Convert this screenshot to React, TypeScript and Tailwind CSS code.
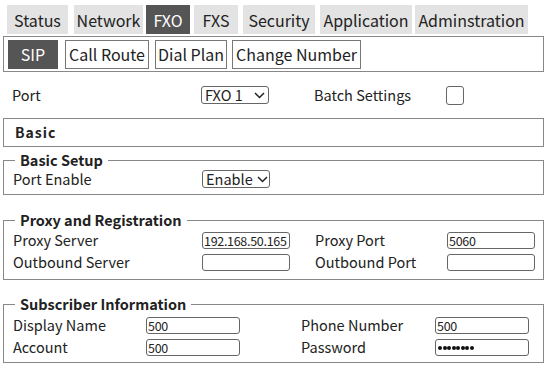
const font = "font-['Noto_Sans_CJK_SC','Noto_Sans',sans-serif]";

const topTabs = [
  { label: "Status", cls: "w-[61px]" },
  { label: "Network", cls: "ml-[6px] w-[69px]" },
  { label: "FXO", cls: "ml-[3px] w-[44px]" },
  { label: "FXS", cls: "ml-[4px] w-[44px]" },
  { label: "Security", cls: "ml-[5px] w-[72px]" },
  { label: "Application", cls: "ml-[5px] w-[92px]" },
  { label: "Adminstration", cls: "ml-[3px] w-[113px]" },
];

const subTabs = [
  { label: "SIP", cls: "w-[50px]" },
  { label: "Call Route", cls: "ml-[7px] w-[84px]" },
  { label: "Dial Plan", cls: "ml-[6px] w-[72px]" },
  { label: "Change Number", cls: "ml-[5px] w-[129px]" },
];

function Chevron() {
  return (
    <svg width="11" height="7" viewBox="0 0 11 7" className="ml-[4px] shrink-0">
      <polyline points="1,1 5.5,5.5 10,1" fill="none" stroke="#222" strokeWidth="1.5" />
    </svg>
  );
}

function Select({ value, className = "" }: { value: string; className?: string }) {
  return (
    <div className={`flex h-[18px] w-[68px] items-center rounded-[3px] border border-[#666] px-[3px] text-[14.5px] leading-none ${className}`}>
      <span>{value}</span>
      <Chevron />
    </div>
  );
}

function Input({ value = "", w = "w-[88px]", dots = false }: { value?: string; w?: string; dots?: boolean }) {
  return (
    <div className={`flex h-[17px] ${w} shrink-0 items-center whitespace-nowrap rounded-[3px] border border-[#666] px-[1px] text-[12.5px] leading-[15px] tracking-[-0.3px]`}>
      {dots ? (
        <div className="mt-[2px] flex gap-[0.5px] pl-[1px]">
          {Array.from({ length: 8 }).map((_, i) => (
            <span key={i} className="h-[4px] w-[4px] rounded-full bg-[#111]" />
          ))}
        </div>
      ) : (
        value
      )}
    </div>
  );
}

function Group({ title, children, className = "" }: { title: string; children: React.ReactNode; className?: string }) {
  return (
    <fieldset className={`mx-[3px] w-[541px] border border-[#888] px-[8px] ${className}`}>
      <legend className="ml-[3px] px-[5px] text-[14.5px] font-bold leading-[16px]">{title}</legend>
      {children}
    </fieldset>
  );
}

export default function App() {
  return (
    <div className={`h-[371px] w-[550px] overflow-hidden bg-white text-[#222] ${font}`}>
      {/* main menu */}
      <div className="flex pl-[7px] pt-[5px]">
        {topTabs.map((t) => (
          <div
            key={t.label}
            className={`flex h-[29px] items-center justify-center text-[16px] ${t.cls} ${t.label === "FXO" ? "bg-[#555] text-white" : "bg-[#e3e3e3]"}`}
          >
            {t.label}
          </div>
        ))}
      </div>

      {/* sub menu */}
      <div className="mx-[3px] mt-[2px] flex h-[36px] w-[541px] items-center border border-[#888] pl-[4px]">
        {subTabs.map((t) => (
          <div
            key={t.label}
            className={`flex h-[29px] items-center justify-center border text-[16px] ${t.cls} ${t.label === "SIP" ? "border-[#555] bg-[#555] text-white" : "border-[#777] bg-white"}`}
          >
            {t.label}
          </div>
        ))}
      </div>

      {/* port row */}
      <div className="mt-[13px] flex h-[20px] items-center text-[14.5px]">
        <span className="w-[201px] pl-[12px]">Port</span>
        <Select value="FXO 1" className="justify-between" />
        <span className="ml-[45px] w-[132px]">Batch Settings</span>
        <div className="h-[19px] w-[18px] rounded-[3px] border border-[#666]" />
      </div>

      {/* Basic header */}
      <div className="mx-[3px] mt-[13px] flex h-[29px] w-[541px] items-center border border-[#888] pl-[11px] text-[14px] font-bold tracking-[1px]">
        Basic
      </div>

      <Group title="Basic Setup" className="mt-[5px] pb-[5px]">
        <div className="mt-[1px] flex h-[20px] items-center text-[14.5px]">
          <span className="w-[190px] pl-[1px]">Port Enable</span>
          <Select value="Enable" />
        </div>
      </Group>

      <Group title="Proxy and Registration" className="mt-[17px] pb-[6px] pt-[1px]">
        <div className="flex h-[22px] items-center text-[14.5px]">
          <span className="w-[190px] pl-[1px]">Proxy Server</span>
          <Input value="192.168.50.165" />
          <span className="ml-[25px] w-[132px]">Proxy Port</span>
          <Input value="5060" />
        </div>
        <div className="flex h-[22px] items-center text-[14.5px]">
          <span className="w-[190px] pl-[1px]">Outbound Server</span>
          <Input />
          <span className="ml-[25px] w-[132px]">Outbound Port</span>
          <Input />
        </div>
      </Group>

      <Group title="Subscriber Information" className="mt-[16px] pb-[4px] pt-[2px]">
        <div className="flex h-[22px] items-center text-[14.5px]">
          <span className="w-[134px] pl-[1px]">Display Name</span>
          <Input value="500" w="w-[94px]" />
          <span className="ml-[61px] w-[134px]">Phone Number</span>
          <Input value="500" w="w-[94px]" />
        </div>
        <div className="flex h-[22px] items-center text-[14.5px]">
          <span className="w-[134px] pl-[1px]">Account</span>
          <Input value="500" w="w-[94px]" />
          <span className="ml-[61px] w-[134px]">Password</span>
          <Input dots w="w-[94px]" />
        </div>
      </Group>
    </div>
  );
}
